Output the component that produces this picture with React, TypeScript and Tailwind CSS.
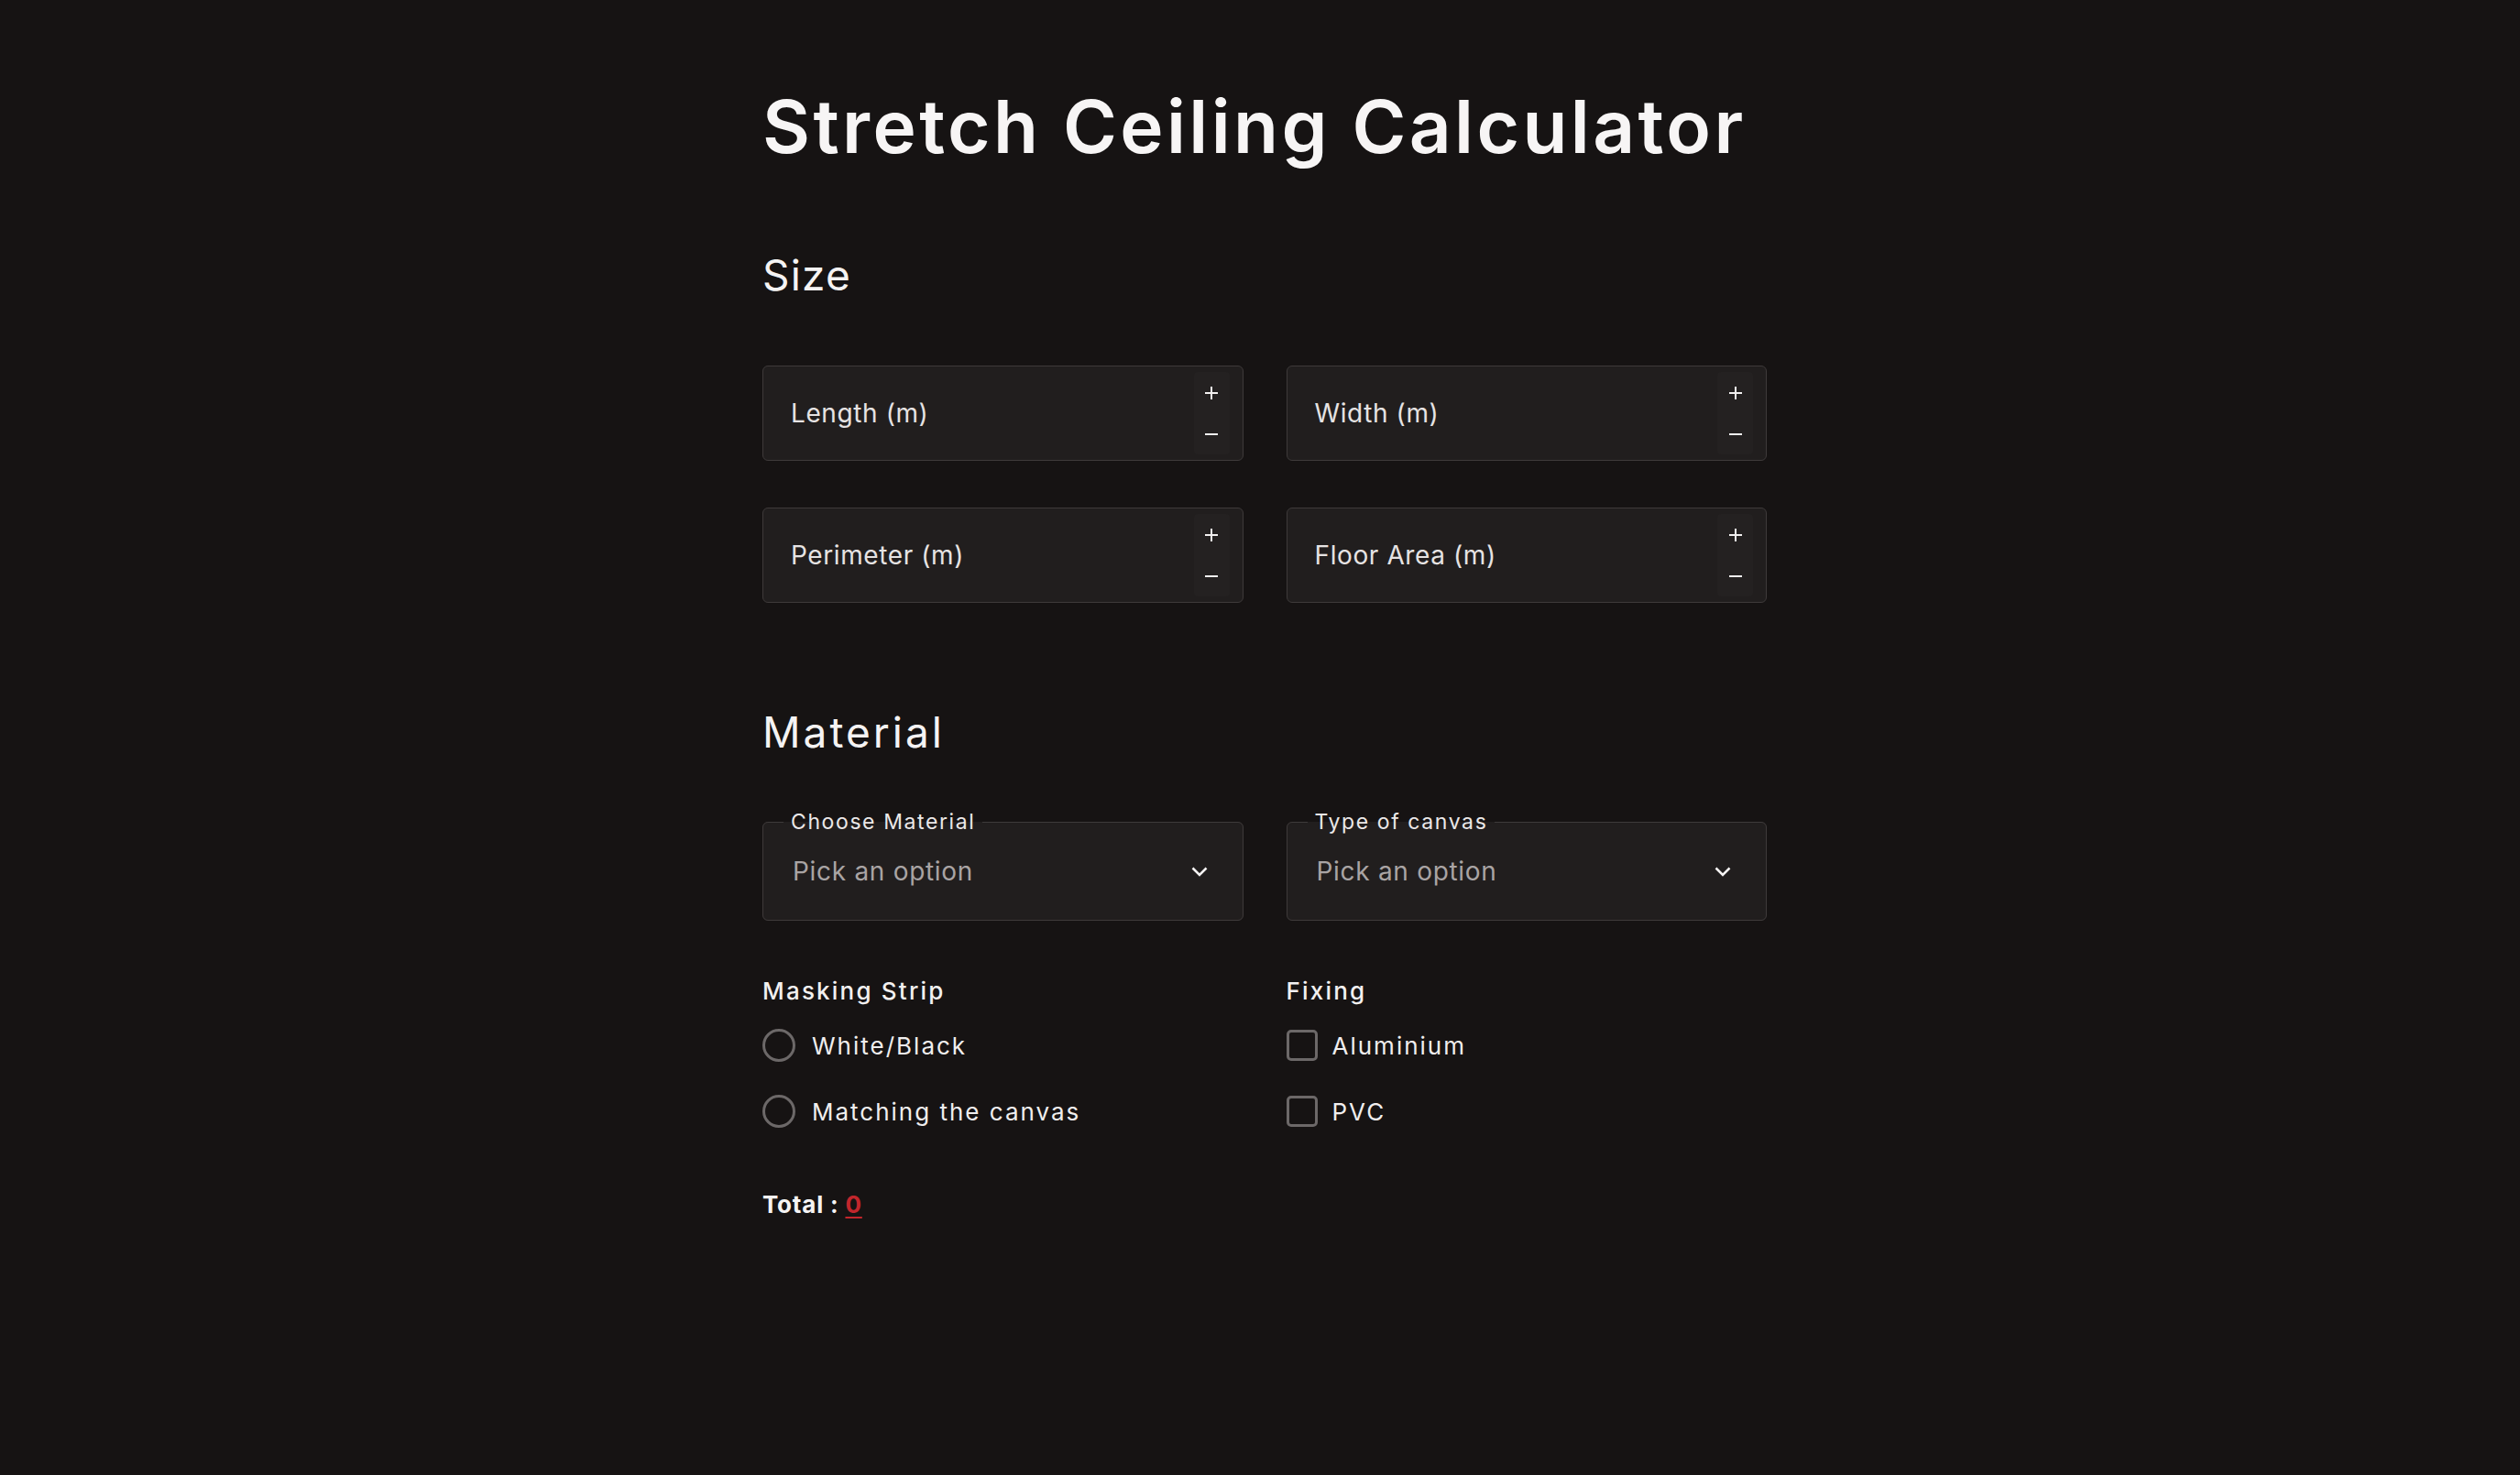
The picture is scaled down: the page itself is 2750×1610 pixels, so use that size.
import React from 'react';

const font = { fontFamily: 'Inter, "Noto Sans", sans-serif' };

function Stepper() {
  return (
    <div className="flex flex-col w-[39px] h-[90px] bg-[#242121] rounded-sm">
      <button className="flex-1 flex items-center justify-center">
        <svg width="14" height="14" viewBox="0 0 14 14" stroke="#f2f0f0" strokeWidth="2">
          <path d="M7 0v14M0 7h14" />
        </svg>
      </button>
      <button className="flex-1 flex items-center justify-center">
        <svg width="14" height="14" viewBox="0 0 14 14" stroke="#f2f0f0" strokeWidth="2">
          <path d="M0 7h14" />
        </svg>
      </button>
    </div>
  );
}

function NumberField({ label }: { label: string }) {
  return (
    <div className="h-[104px] flex items-center justify-between pl-[30px] pr-[14px] bg-[#211e1e] border border-[#3e3a3a] rounded-md">
      <span className="text-[28px] text-[#e6e3e3] tracking-[0.6px]">{label}</span>
      <Stepper />
    </div>
  );
}

function SelectField({ label }: { label: string }) {
  return (
    <fieldset className="border border-[#3e3a3a] rounded-md bg-[#211e1e] px-[32px] pb-[13px]">
      <legend className="ml-[-10px] px-[8px] text-[23px] leading-[28px] text-[#ebe8e8] tracking-[1.6px]">{label}</legend>
      <div className="h-[80px] flex items-center justify-between">
        <span className="text-[28px] text-[#a9a4a4] tracking-[0.7px]">Pick an option</span>
        <svg width="18" height="11" viewBox="0 0 18 11" fill="none" stroke="#f5f3f3" strokeWidth="2.5" className="mr-[6px]">
          <path d="M1.5 1.5l7.5 7.5 7.5-7.5" />
        </svg>
      </div>
    </fieldset>
  );
}

function Radio({ label }: { label: string }) {
  return (
    <label className="h-[36px] flex items-center gap-[18px]">
      <span className="w-[36px] h-[36px] rounded-full border-[3px] border-[#6c6868]" />
      <span className="text-[26px] text-[#f0eeee] tracking-[2px]">{label}</span>
    </label>
  );
}

function Check({ label }: { label: string }) {
  return (
    <label className="h-[36px] flex items-center gap-[16px]">
      <span className="w-[34px] h-[34px] rounded-[5px] border-[3px] border-[#6c6868]" />
      <span className="text-[26px] text-[#f0eeee] tracking-[2px]">{label}</span>
    </label>
  );
}

export default function App() {
  return (
    <div className="min-h-screen bg-[#161313]" style={font}>
      <div className="mx-auto w-[1106px] pl-[10px] pt-[98px] pb-[200px]">
        {/* Title */}
        <h1 className="text-[80px] leading-none font-semibold text-[#f7f5f5] tracking-[3.4px]">
          Stretch Ceiling Calculator
        </h1>

        {/* Size */}
        <h2 className="mt-[99px] text-[46px] leading-none text-[#f5f3f3] tracking-[1.2px]">Size</h2>
        <div className="mt-[76px] grid grid-cols-2 gap-x-[47px] gap-y-[51px]">
          <NumberField label="Length (m)" />
          <NumberField label="Width (m)" />
          <NumberField label="Perimeter (m)" />
          <NumberField label="Floor Area (m)" />
        </div>

        {/* Material */}
        <h2 className="mt-[118px] text-[46px] leading-none text-[#f5f3f3] tracking-[3px]">Material</h2>
        <div className="mt-[61px] grid grid-cols-2 gap-x-[47px]">
          <SelectField label="Choose Material" />
          <SelectField label="Type of canvas" />
        </div>

        <div className="mt-[64px] grid grid-cols-2 gap-x-[47px]">
          <div>
            <div className="text-[26px] leading-none font-medium text-[#f2f0f0] tracking-[2.2px]">Masking Strip</div>
            <div className="mt-[28px] flex flex-col gap-[36px]">
              <Radio label="White/Black" />
              <Radio label="Matching the canvas" />
            </div>
          </div>
          <div>
            <div className="text-[26px] leading-none font-medium text-[#f2f0f0] tracking-[2.2px]">Fixing</div>
            <div className="mt-[28px] flex flex-col gap-[36px]">
              <Check label="Aluminium" />
              <Check label="PVC" />
            </div>
          </div>
        </div>

        {/* Total */}
        <div className="mt-[71px] text-[26px] leading-none font-bold text-[#f5f3f3] tracking-[0.8px]">
          Total : <span className="text-[#c2262c] underline underline-offset-4">0</span>
        </div>
      </div>
    </div>
  );
}
